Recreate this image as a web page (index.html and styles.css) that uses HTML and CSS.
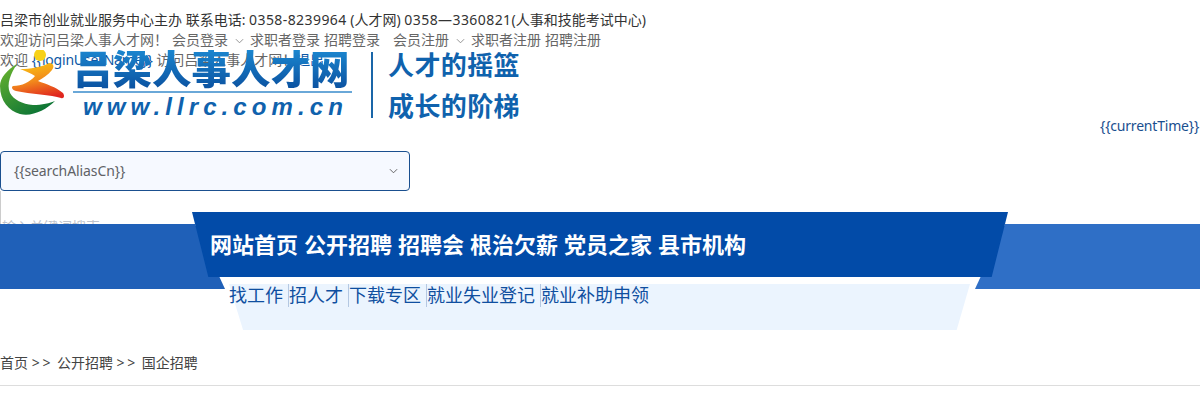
FILE: index.html
```html
<!DOCTYPE html>
<html lang="zh-CN">
<head>
    <meta charset="UTF-8">
    <meta name="viewport" content="width=device-width, initial-scale=1.0">
    <title>吕梁人事人才网</title>
    <link rel="stylesheet" href="styles.css">
</head>
<body>
    <div class="top-info">吕梁市创业就业服务中心主办 联系电话: <span class="phone">0358-8239964</span> (人才网) <span class="phone">0358—3360821</span>(人事和技能考试中心)</div>
    <div class="top-links">
        <span class="welcome">欢迎访问吕梁人事人才网！</span>
        <span class="drop">会员登录
            <svg class="chevron" viewBox="0 0 10 6"><path d="M1 1l4 4 4-4"/></svg>
        </span>
        <a class="link">求职者登录</a>
        <a class="link">招聘登录</a>
        <span class="drop drop-second">会员注册
            <svg class="chevron" viewBox="0 0 10 6"><path d="M1 1l4 4 4-4"/></svg>
        </span>
        <a class="link">求职者注册</a>
        <a class="link">招聘注册</a>
    </div>
    <div class="user-line">欢迎 <span class="user-name">{{loginUserName}}</span> 访问吕梁人事人才网！<span class="user-name">退出</span></div>

    <div class="header">
        <svg class="logo-mark" viewBox="0 0 66 70">
            <defs>
                <linearGradient id="orange" x1="0.3" y1="0" x2="0.6" y2="1">
                    <stop offset="0" stop-color="#f9c312"/>
                    <stop offset="0.5" stop-color="#f28a1c"/>
                    <stop offset="1" stop-color="#e0261f"/>
                </linearGradient>
                <linearGradient id="green" x1="0" y1="0" x2="0.7" y2="1">
                    <stop offset="0" stop-color="#6cb52d"/>
                    <stop offset="1" stop-color="#0b7436"/>
                </linearGradient>
            </defs>
            <circle cx="40" cy="5" r="6" fill="#f7d117"/>
            <path fill="url(#orange)" d="M20 19C30 19 42 17 49 13 53 13 55 16 52 20 48 25 43 28 38 31 46 34 56 37 63 43 65 46 64 49 61 48 52 45 30 44 16 41 12 40 11 37 13 36 22 36 30 32 35 26 31 23 25 21 20 19Z"/>
            <path fill="url(#green)" d="M17 14C7 20 0 28 0 36 0 51 9 61 20 64 32 67 46 60 55 51 50 53 42 55 33 55 22 54 14 50 10 43 6 34 11 23 17 14Z"/>
        </svg>
        <div class="logo-title">
            <div class="logo-name">吕梁人事人才网</div>
            <div class="logo-url">www.llrc.com.cn</div>
        </div>
        <div class="slogan">
            <div>人才的摇篮</div>
            <div>成长的阶梯</div>
        </div>
    </div>

    <div class="current-time">{{currentTime}}</div>

    <div class="search-select">
        <span>{{searchAliasCn}}</span>
        <svg class="chevron select-chevron" viewBox="0 0 10 6"><path d="M1 1l4 4 4-4"/></svg>
    </div>
    <div class="search-input">输入关键词搜索</div>

    <div class="nav-band">
        <div class="band-left"></div>
        <div class="band-right"></div>
        <div class="nav-main">
            <a>网站首页</a>
            <a>公开招聘</a>
            <a>招聘会</a>
            <a>根治欠薪</a>
            <a>党员之家</a>
            <a>县市机构</a>
        </div>
        <div class="nav-sub">
            <a>找工作</a>
            <a>招人才</a>
            <a>下载专区</a>
            <a>就业失业登记</a>
            <a>就业补助申领</a>
        </div>
    </div>

    <div class="breadcrumb">首页 <span class="crumb-sep">&gt;&gt;</span> 公开招聘 <span class="crumb-sep">&gt;&gt;</span> 国企招聘</div>
</body>
</html>
```

FILE: styles.css
```css
body {
    margin: 0;
    padding-top: 10px;
    background: #fff;
    color: #333;
    font-family: "Noto Sans", "Noto Sans CJK SC", sans-serif;
    font-size: 14px;
    line-height: 20px;
    overflow: hidden;
}

.top-info {
    height: 20px;
    white-space: nowrap;
}

.phone {
    letter-spacing: 0.42px;
}

.top-links {
    display: flex;
    height: 20px;
    color: #666;
    white-space: nowrap;
}

.welcome {
    margin-right: 4px;
}

.drop {
    display: flex;
    align-items: center;
}

.drop-second {
    margin-left: 9px;
}

.link {
    margin-right: 4px;
}

.chevron {
    width: 9px;
    height: 6px;
    margin: 2px 6px 0 7px;
    fill: none;
    stroke: #888;
    stroke-width: 1;
}

.user-line {
    height: 20px;
    color: #666;
    white-space: nowrap;
}

.user-name {
    color: #0d57a5;
    letter-spacing: -0.2px;
}

/* logo sits on top of the welcome line */
.header {
    position: relative;
    display: flex;
    height: 66px;
    margin-top: -20px;
}

.logo-mark {
    width: 66px;
    height: 70px;
    flex-shrink: 0;
}

.logo-title {
    width: 279px;
    margin-left: 7px;
}

.logo-name {
    height: 41px;
    border-bottom: 2px solid #6aa8d8;
    background: linear-gradient(180deg, #1b86cf, #0a4f9e);
    -webkit-background-clip: text;
    background-clip: text;
    color: transparent;
    font-size: 39.5px;
    font-weight: 900;
    line-height: 38px;
    white-space: nowrap;
}

.logo-url {
    padding-left: 10px;
    color: #0f62ad;
    font-family: "Liberation Sans", sans-serif;
    font-size: 24px;
    font-style: italic;
    font-weight: 700;
    letter-spacing: 5.1px;
    line-height: 28px;
    white-space: nowrap;
}

.slogan {
    height: 66px;
    margin-top: 2px;
    margin-left: 19px;
    padding-left: 15px;
    border-left: 2px solid #1a66a8;
    color: #0f62ad;
    font-size: 26px;
    font-weight: 700;
    letter-spacing: 0.4px;
    line-height: 42px;
}

.slogan div {
    height: 42px;
    margin-top: -8px;
}

.slogan div + div {
    margin-top: -1px;
}

.current-time {
    height: 20px;
    padding-right: 1px;
    color: #1a4f8f;
    letter-spacing: -0.2px;
    text-align: right;
}

.search-select {
    box-sizing: border-box;
    display: flex;
    align-items: center;
    justify-content: space-between;
    width: 410px;
    height: 40px;
    margin-top: 15px;
    padding: 0 15px 0 13px;
    border: 1px solid #1a4f8f;
    border-radius: 4px;
    background: #f6f9ff;
    color: #606266;
    letter-spacing: -0.1px;
}

.select-chevron {
    margin: 0 -4px 0 0;
    stroke: #555;
}

.search-input {
    box-sizing: border-box;
    height: 33px;
    padding: 26px 0 0 1px;
    border-left: 1px solid #ccc;
    color: #c0c4cc;
    overflow: hidden;
}

.nav-band {
    position: relative;
    display: flex;
    justify-content: space-between;
    height: 65px;
}

.band-left {
    width: 225px;
    background: #1f60b8;
    clip-path: polygon(0 0, 195px 0, 225px 100%, 0 100%);
}

.band-right {
    width: 230px;
    background: #2f6fc6;
    clip-path: polygon(35px 0, 100% 0, 100% 100%, 5px 100%);
}

.nav-main {
    position: absolute;
    top: -12px;
    left: 192px;
    display: flex;
    gap: 6px;
    box-sizing: border-box;
    width: 816px;
    height: 65px;
    padding-left: 18px;
    background: #024ba8;
    clip-path: polygon(0 0, 100% 0, 98% 100%, 2% 100%);
    color: #fff;
    font-size: 22px;
    font-weight: 700;
    line-height: 65px;
}

.nav-sub {
    position: absolute;
    top: 60px;
    left: 229px;
    display: flex;
    width: 741px;
    height: 46px;
    color: #0f4fa0;
    font-size: 18px;
    line-height: 23px;
}

/* shape stays behind the links so the first one is not cut */
.nav-sub::before {
    content: "";
    position: absolute;
    inset: 0;
    z-index: -1;
    background: #ebf4fe;
    clip-path: polygon(0 0, 100% 0, 98.2% 100%, 1.9% 100%);
}

.nav-sub a {
    height: 23px;
    padding-right: 5px;
    border-right: 1px solid #b4c8e2;
}

.nav-sub a:last-child {
    border-right: 0;
}

.breadcrumb {
    margin-top: 64px;
    padding-bottom: 12px;
    border-bottom: 1px solid #ddd;
    color: #444;
}

.crumb-sep {
    letter-spacing: 2.8px;
}
```
